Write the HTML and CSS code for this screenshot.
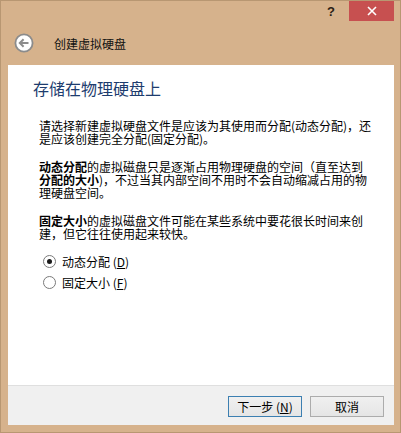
FILE: index.html
```html
<!DOCTYPE html>
<html lang="zh-CN">
<head>
    <meta charset="UTF-8">
    <meta name="viewport" content="width=device-width, initial-scale=1.0">
    <title>创建虚拟硬盘</title>
    <link rel="stylesheet" href="styles.css">
</head>
<body>
    <div class="window">
        <div class="titlebar">
            <span class="help">?</span>
            <button class="close" aria-label="关闭">
                <svg width="10" height="10" viewBox="0 0 10 10">
                    <path d="M1 1 L9 9 M9 1 L1 9" stroke="#fff" stroke-width="1.6" fill="none"/>
                </svg>
            </button>
        </div>

        <div class="header">
            <button class="back" aria-label="返回">
                <svg width="20" height="20" viewBox="0 0 20 20">
                    <circle cx="10" cy="10" r="8.6" fill="#fff" stroke="#8c8c8c" stroke-width="1.8"/>
                    <path d="M14.5 10 H6 M9.6 6.2 L5.8 10 L9.6 13.8" stroke="#8c8c8c" stroke-width="2" fill="none"/>
                </svg>
            </button>
            <span class="wizard-title">创建虚拟硬盘</span>
        </div>

        <div class="panel">
            <div class="content">
                <h1>存储在物理硬盘上</h1>

                <p>请选择新建虚拟硬盘文件是应该为其使用而分配(动态分配)，还<br>是应该创建完全分配(固定分配)。</p>

                <p><b>动态分配</b>的虚拟磁盘只是逐渐占用物理硬盘的空间（直至达到<br><b>分配的大小</b>)，不过当其内部空间不用时不会自动缩减占用的物<br>理硬盘空间。</p>

                <p><b>固定大小</b>的虚拟磁盘文件可能在某些系统中要花很长时间来创<br>建，但它往往使用起来较快。</p>

                <div class="options">
                    <label class="option">
                        <input type="radio" name="variant" checked>
                        <span>动态分配 (<u>D</u>)</span>
                    </label>
                    <label class="option">
                        <input type="radio" name="variant">
                        <span>固定大小 (<u>F</u>)</span>
                    </label>
                </div>
            </div>

            <div class="footer">
                <button class="btn btn-default">下一步 (<u>N</u>)</button>
                <button class="btn">取消</button>
            </div>
        </div>
    </div>
</body>
</html>
```

FILE: styles.css
```css
body {
    margin: 0;
    font-family: "Noto Sans CJK SC", "Liberation Sans", sans-serif;
    font-size: 12px;
    color: #000;
}

.window {
    width: 401px;
    height: 433px;
    box-sizing: border-box;
    border: 1px solid #b89772;
    background-color: #d6b28c;
    padding: 0 6px 7px 7px;
    display: flex;
    flex-direction: column;
}

.titlebar {
    height: 20px;
    display: flex;
    justify-content: flex-end;
    align-items: stretch;
}

.help {
    font-family: "Liberation Sans", sans-serif;
    font-weight: bold;
    font-size: 13px;
    color: #2b2114;
    width: 30px;
    line-height: 22px;
    text-align: center;
    margin-right: 3px;
}

.close {
    width: 45px;
    border: 0;
    padding: 0;
    background-color: #c75050;
    display: flex;
    justify-content: center;
    align-items: center;
}

.header {
    height: 44px;
    display: flex;
    align-items: center;
}

.back {
    width: 20px;
    height: 20px;
    border: 0;
    padding: 0;
    margin-left: 6px;
    background: none;
    display: flex;
}

.wizard-title {
    margin-left: 20px;
    font-size: 12px;
    color: #111;
}

.panel {
    flex: 1;
    background-color: #fff;
    display: flex;
    flex-direction: column;
}

.content {
    flex: 1;
    padding: 13px 10px 0 25px;
}

h1 {
    margin: 0 0 21px;
    font-size: 16px;
    font-weight: normal;
    line-height: 20px;
    color: #1d3c6e;
}

p {
    margin: 0 0 15px 6px;
    line-height: 13px;
    white-space: nowrap;
}

p b {
    display: inline-block;
    font-weight: bold;
    line-height: 13px;
    vertical-align: top;
}

.options {
    margin-top: 13px;
    margin-left: 10px;
    display: flex;
    flex-direction: column;
    gap: 8px;
}

.option {
    display: flex;
    align-items: center;
    gap: 6px;
    height: 13px;
    line-height: 13px;
}

.option input {
    appearance: none;
    margin: 0;
    width: 13px;
    height: 13px;
    border: 1px solid #7a7a7a;
    border-radius: 50%;
    background-color: #fff;
    box-sizing: border-box;
    display: flex;
    justify-content: center;
    align-items: center;
}

.option input:checked::after {
    content: "";
    width: 5px;
    height: 5px;
    border-radius: 50%;
    background-color: #1a1a1a;
}

.footer {
    height: 40px;
    box-sizing: border-box;
    border-top: 1px solid #dfdfdf;
    background-color: #f0f0f0;
    display: flex;
    justify-content: flex-end;
    align-items: flex-start;
    gap: 8px;
    padding: 10px 10px 0 0;
}

.btn {
    width: 74px;
    height: 21px;
    padding: 0;
    border: 1px solid #acacac;
    background: linear-gradient(#f0f0f0, #e5e5e5);
    font-family: "Noto Sans CJK SC", "Liberation Sans", sans-serif;
    font-size: 12px;
    color: #000;
}

.btn-default {
    border-color: #3c7fb1;
}
```
